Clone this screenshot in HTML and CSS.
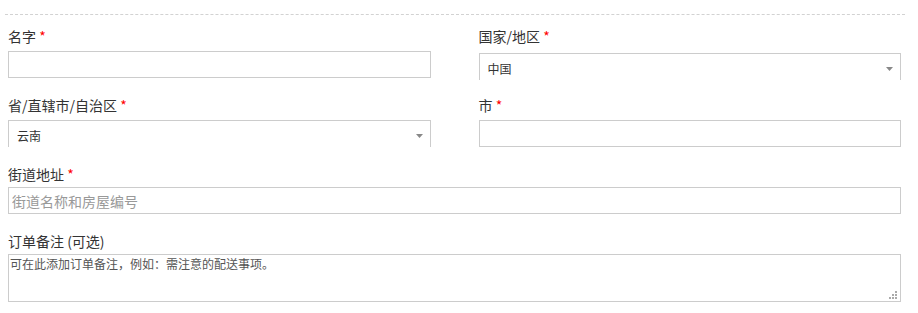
FILE: index.html
```html
<!doctype html>
<html lang="zh-CN">
<head>
	<meta charset="utf-8" />
	<title>账单详情</title>
	<link rel="stylesheet" href="styles.css">
</head>
<body>
	<div class="sep"></div>
	<form class="billing">
		<!-- 名字 / 国家 -->
		<div class="row cols">
			<div class="field">
				<label for="name">名字 <abbr class="req">*</abbr></label>
				<input id="name" class="text" type="text">
			</div>
			<div class="field country">
				<label>国家/地区 <abbr class="req">*</abbr></label>
				<div class="select">
					<span>中国</span>
					<svg class="arrow" width="7" height="4" viewBox="0 0 7 4"><path d="M0 0h7L3.5 4z" fill="#888"/></svg>
				</div>
			</div>
		</div>
		<!-- 省 / 市 -->
		<div class="row cols second">
			<div class="field">
				<label>省/直辖市/自治区 <abbr class="req">*</abbr></label>
				<div class="select">
					<span>云南</span>
					<svg class="arrow" width="7" height="4" viewBox="0 0 7 4"><path d="M0 0h7L3.5 4z" fill="#888"/></svg>
				</div>
			</div>
			<div class="field">
				<label for="city">市 <abbr class="req">*</abbr></label>
				<input id="city" class="text" type="text">
			</div>
		</div>
		<!-- 地址 -->
		<div class="row wide">
			<label for="addr">街道地址 <abbr class="req">*</abbr></label>
			<input id="addr" class="text" type="text" placeholder="街道名称和房屋编号">
		</div>
		<div class="row wide">
			<label for="note">订单备注 (可选)</label>
			<div class="note-wrap">
				<textarea id="note" class="note" placeholder="可在此添加订单备注，例如：需注意的配送事项。"></textarea>
				<svg class="grip" width="8" height="8" viewBox="0 0 8 8">
					<g fill="#aaa">
						<rect x="6" y="0" width="2" height="2"/>
						<rect x="3" y="3" width="2" height="2"/>
						<rect x="6" y="3" width="2" height="2"/>
						<rect x="0" y="6" width="2" height="2"/>
						<rect x="3" y="6" width="2" height="2"/>
						<rect x="6" y="6" width="2" height="2"/>
					</g>
				</svg>
			</div>
		</div>
	</form>
</body>
</html>
```

FILE: styles.css
```css
* {
	margin: 0;
	padding: 0;
	box-sizing: border-box;
}
body {
	font-family: "Noto Sans CJK SC", "Liberation Sans", sans-serif;
	color: #333;
	background-color: #fff;
}
.sep {
	margin: 14px 13px 0 5px;
	border-top: 1px dashed #d2d2d2;
}
.billing {
	padding: 11px 17px 0 8px;
}
.cols {
	display: grid;
	grid-template-columns: 1fr 1fr;
	column-gap: 48px;
}
.row {
	margin-top: 17px;
}
.row:first-child {
	margin-top: 0;
}
.cols.second {
	margin-top: 15px;
}
label {
	display: block;
	font-size: 14px;
	line-height: 20px;
	margin-bottom: 5px;
}
.wide label {
	margin-bottom: 3px;
}
.req {
	color: red;
	text-decoration: none;
	border: none;
}
.text {
	display: block;
	width: 100%;
	height: 27px;
	padding: 0 3px;
	border: 1px solid #ccc;
	font-family: inherit;
	font-size: 14px;
	color: #333;
	outline: none;
}
.text::placeholder {
	color: #999;
}
.select {
	height: 27px;
	border: 1px solid #ccc;
	border-bottom: none;
	padding: 3px 7px 0 8px;
	display: flex;
	align-items: center;
	justify-content: space-between;
	font-size: 12px;
	line-height: 16px;
}
.country .select {
	margin-top: 7px;
}
.country label {
	margin-bottom: 0;
}
.arrow {
	display: block;
}
.note-wrap {
	position: relative;
}
.note {
	display: block;
	width: 100%;
	height: 48px;
	padding: 1px 0 0 1px;
	border: 1px solid #ccc;
	font-family: inherit;
	font-size: 12px;
	line-height: 16px;
	color: #555;
	outline: none;
	resize: none;
}
.note::placeholder {
	color: #555;
}
/* 右下角拖动点 */
.grip {
	position: absolute;
	right: 4px;
	bottom: 3px;
	display: block;
}
```
